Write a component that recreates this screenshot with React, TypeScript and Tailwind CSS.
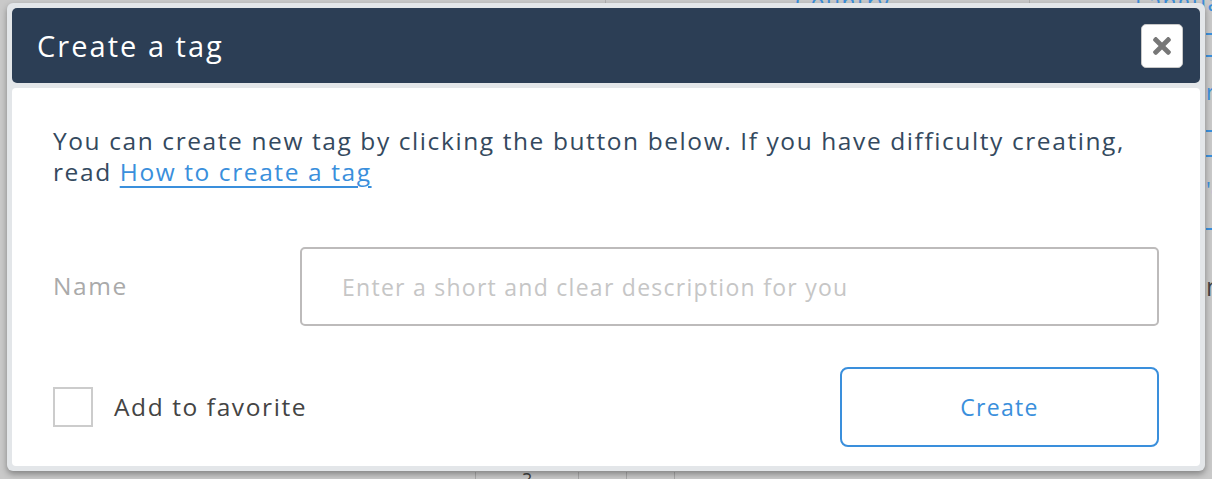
import { FaTimes } from 'react-icons/fa';

const font = { fontFamily: '"Open Sans", "Noto Sans", sans-serif' };

// faint table peeking out from behind the modal overlay
function BackgroundTable() {
    return (
        <div className="absolute inset-0 text-[#3a8fdc]">
            <div className="absolute left-[605px] top-0 flex h-[8px] w-[425px] justify-between">
                <span className="w-px bg-[#b0b0b0]" />
                <span className="w-px bg-[#b0b0b0]" />
            </div>
            <div className="absolute left-[795px] top-[-15px] text-[23px] tracking-[0.06em]">Country</div>
            <div className="absolute left-[1135px] top-[-15px] text-[23px] tracking-[0.06em]">Language</div>
            <div className="absolute left-[1206px] top-0 flex w-[10px] flex-col">
                <span className="mt-[33px] h-[2px] bg-[#3a8fdc]" />
                <span className="mt-[20px] h-[2px] bg-[#3a8fdc]" />
                <span className="mt-[22px] h-[24px] text-[22px] leading-[24px]">r</span>
                <span className="mt-[27px] h-[2px] bg-[#3a8fdc]" />
                <span className="mt-[23px] h-[2px] bg-[#3a8fdc]" />
                <span className="mt-[20px] h-[24px] text-[22px] leading-[24px]">'e</span>
                <span className="mt-[27px] h-[2px] bg-[#3a8fdc]" />
                <span className="mt-[42px] text-[25px] leading-[28px] text-[#444]">n</span>
            </div>
            <div className="absolute left-[475px] top-[472px] flex h-[8px] w-[200px] justify-between text-[20px] leading-[16px] text-[#444]">
                <span className="w-px bg-[#a8a8a8]" />
                <span>?</span>
                <span className="w-px bg-[#a8a8a8]" />
                <span className="w-px bg-[#a8a8a8]" />
                <span className="w-px bg-[#a8a8a8]" />
            </div>
        </div>
    );
}

export default function App() {
    return (
        <div className="relative h-[479px] w-[1212px] overflow-hidden bg-[#c9c9c9]" style={font}>
            <BackgroundTable />

            <div className="absolute left-[7px] top-[3px] flex h-[468px] w-[1198px] flex-col gap-[5px] rounded-[6px] bg-[#e3e6e9] p-[5px] shadow-[0_3px_6px_rgba(0,0,0,0.35)]">
                <div className="flex h-[75px] items-center justify-between rounded-[5px] bg-[#2c3e55] pl-[25px] pr-[17px]">
                    <h2 className="text-[29px] font-medium tracking-[0.07em] text-white">Create a tag</h2>
                    <button className="flex h-[44px] w-[42px] items-center justify-center rounded-[5px] border border-[#c8c8c8] bg-white">
                        <FaTimes size={26} className="text-[#777777]" />
                    </button>
                </div>

                <div className="flex flex-1 flex-col rounded-[4px] bg-white px-[41px] pt-[37px]">
                    <p className="text-[24.5px] leading-[31px] tracking-[0.065em] text-[#34495e]">
                        You can create new tag by clicking the button below. If you have difficulty creating,
                        <br />
                        read{' '}
                        <a href="#" className="text-[#3a8fdc] underline decoration-2 underline-offset-[5px]">
                            How to create a tag
                        </a>
                    </p>

                    <div className="mt-[60px] flex items-center">
                        <label className="w-[247px] text-[24.5px] tracking-[0.065em] text-[#aaaaaa]">Name</label>
                        <input
                            className="h-[79px] flex-1 rounded-[5px] border-2 border-[#bdbbbb] px-[40px] text-[23px] tracking-[0.055em] outline-none placeholder:text-[#c6c6c6]"
                            placeholder="Enter a short and clear description for you"
                        />
                    </div>

                    <div className="mt-[41px] flex items-center justify-between">
                        <label className="flex items-center gap-[21px]">
                            <span className="h-[40px] w-[40px] border-2 border-[#cccccc]" />
                            <span className="text-[24.5px] tracking-[0.065em] text-[#444444]">Add to favorite</span>
                        </label>
                        <button className="h-[80px] w-[319px] rounded-[8px] border-2 border-[#3a8fdc] text-[23px] tracking-[0.055em] text-[#3a8fdc]">
                            Create
                        </button>
                    </div>
                </div>
            </div>
        </div>
    );
}
